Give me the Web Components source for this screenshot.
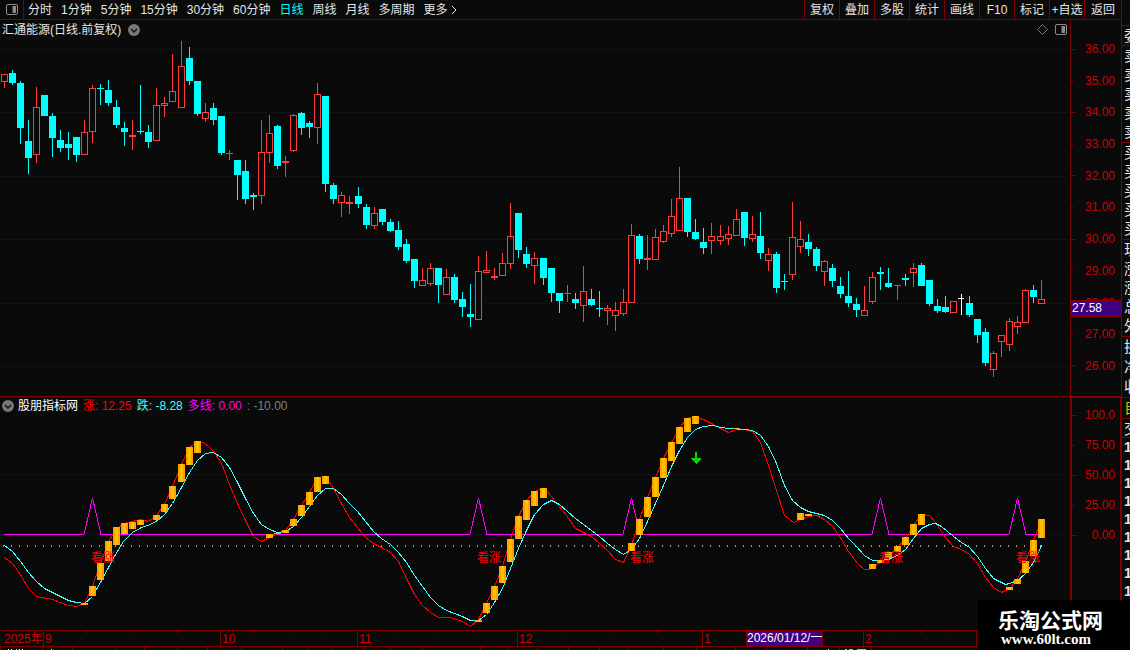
<!DOCTYPE html>
<html lang="zh-CN">
<head>
<meta charset="utf-8">
<meta name="viewport" content="width=device-width, initial-scale=1">
<title>汇通能源</title>
<style>
  html { background: #0a0a0a; }
  body {
    margin: 0;
    overflow-x: hidden;
    color: #e6e6e6;
    font: 12px/18px "Liberation Sans", "Noto Sans CJK SC", sans-serif;
    --bg: #0a0a0a;
    --line: #800000;
    --axis: #d00000;
    --up: #ff3c3c;
    --down: #00ffff;
    --mark: #400080;
  }
</style>
</head>
<body>
<stock-terminal></stock-terminal>

<script>
const define = (name, html, setup) => {
  const template = document.createElement('template');
  template.innerHTML = html;
  customElements.define(name, class extends HTMLElement {
    constructor() {
      super();
      this.attachShadow({ mode: 'open' }).append(template.content.cloneNode(true));
    }
    connectedCallback() {
      if (setup && !this.ready) { this.ready = true; setup(this.shadowRoot, this); }
    }
  });
};

/* x centre, kind (r rising, c falling, w flat), high, body top, body bottom, low */
const CANDLES = `4r 74 74 82 88|12c 70 73 83 85|20c 81 83 128 144|28c 120 141 158 174|36r 87 107 155 163|44c 95 95 116 116|52c 113 116 138 157|60c 130 140 148 152|68c 132 144 148 160|76c 137 137 155 162|84r 120 132 155 155|92r 85 88 132 143|100c 84 88 89 105|108c 80 90 103 106|116c 100 107 125 128|124c 122 128 132 146|132r 120 135 137 150|140c 85 131 132 134|148c 125 132 142 148|156r 88 105 141 141|164r 97 103 106 117|172r 54 91 102 102|181r 41 66 108 108|189c 47 58 81 85|197c 81 81 114 116|205r 103 112 119 122|213c 103 108 120 125|221c 116 116 153 155|229r 150 153 154 160|237c 160 160 175 200|245c 160 171 199 204|253c 193 195 197 210|261r 120 152 196 204|269r 115 133 153 163|277c 125 126 166 169|285r 156 161 163 177|293r 114 115 151 152|301c 112 113 128 135|309c 121 123 127 138|317r 83 94 128 144|325c 96 96 184 192|333c 183 185 199 204|341r 192 195 203 217|349r 196 202 204 214|358c 187 196 204 208|366c 204 207 225 229|374r 207 213 226 229|382c 209 209 222 225|390c 219 222 231 232|398c 221 230 247 250|406c 239 244 261 263|414c 259 259 281 288|422r 268 280 286 286|430r 263 268 284 286|438c 268 268 285 303|446r 269 277 295 295|454c 274 277 300 303|462c 292 299 307 317|470c 284 314 317 327|478r 256 271 320 320|486r 251 270 273 273|494r 268 276 278 280|502r 253 263 276 276|510r 203 236 264 269|518c 213 213 250 258|526c 247 254 264 268|534r 252 258 266 284|543c 258 258 278 285|551c 268 268 293 302|559c 293 293 301 313|567r 285 293 294 302|575c 293 299 303 309|583r 266 291 306 322|591c 289 299 305 306|599c 291 308 309 317|607r 305 308 311 325|615r 302 310 316 331|623r 289 302 314 316|631r 224 235 303 303|639c 234 236 259 264|647r 235 258 260 270|655r 229 237 260 260|663r 225 231 242 243|671r 199 216 234 237|679r 167 198 231 231|687c 198 198 232 237|695c 219 232 239 240|703c 228 242 248 254|711r 223 236 241 254|720r 225 236 241 245|728r 226 234 239 245|736r 209 219 236 236|744c 212 212 238 246|752r 216 234 239 242|760c 212 236 253 259|768r 248 254 261 271|776c 252 254 288 293|784c 274 281 282 290|792r 202 237 275 280|800r 221 239 247 253|808c 234 242 249 256|816c 247 249 266 271|824r 260 261 272 286|832c 264 268 281 287|840c 277 286 294 298|848c 271 296 303 307|856c 298 304 310 317|864r 286 310 316 316|872r 272 277 302 304|880c 267 272 274 290|888c 268 283 287 288|897r 285 285 286 300|905c 274 278 280 286|913r 263 268 273 287|921c 263 265 286 286|929c 280 280 304 306|937c 299 306 311 313|945c 296 307 312 313|953r 301 301 313 313|961w 294 298 299 315|969c 296 303 315 317|977c 319 319 335 343|985c 328 332 363 366|993r 351 353 370 377|1001r 335 335 342 357|1009r 318 321 345 351|1017r 316 322 327 334|1025r 289 290 323 323|1033c 285 290 297 303|1041r 280 299 304 304`
  .split('|').map(s => { const [, x, kind, rest] = s.match(/^(\d+)(\w) (.*)$/); return [+x, kind, ...rest.split(' ').map(Number)]; });

/* x centre, top, bottom of the rising columns in the indicator */
const BARS = `84 603 605|92 586 596|100 563 580|108 541 561|116 527 545|124 523 534|132 522 529|140 520 525|156 515 520|164 504 512|172 486 499|181 464 482|189 447 465|197 441 453|269 534 538|277 533 534|285 530 533|293 519 526|301 505 516|309 492 505|317 477 492|325 476 484|478 620 622|486 603 613|494 586 600|502 566 583|510 539 562|518 516 539|526 500 520|534 491 506|543 488 498|631 543 551|639 519 535|647 497 517|655 477 497|663 458 478|671 442 461|679 427 444|687 418 432|695 416 424|736 428 429|800 513 520|808 514 516|872 564 569|880 560 563|888 552 558|897 546 552|905 537 545|913 524 535|921 514 525|1009 587 590|1017 579 584|1025 561 573|1033 540 556|1041 519 538`
  .split('|').map(s => s.split(' ').map(Number));

const FAST = '4,557 12,563 20,574 28,588 36,596 52,599 68,605 76,606 84,603 92,586 100,563 108,541 116,528 124,523 132,521 140,519 148,521 156,515 164,504 172,486 181,464 189,447 197,441 203,442 209,447 214,452 221,463 229,484 237,503 245,520 253,536 261,541 269,537 277,533 285,530 293,519 301,505 309,492 317,477 325,476 333,488 341,503 349,517 357,527 365,537 373,543 381,547 390,552 398,561 406,578 414,594 422,605 430,612 438,617 450,617 462,621 470,626 478,619 486,603 494,586 502,566 510,539 518,516 526,500 534,491 541,488 547,491 554,500 566,515 575,528 583,532 591,536 599,543 607,550 615,559 623,562 631,545 639,519 647,497 655,477 663,458 671,442 679,427 687,418 691,417 695,417 703,419 711,423 720,428 728,432 736,429 744,429 752,431 760,442 768,465 776,490 784,515 793,522 800,519 808,516 816,515 824,519 832,526 840,537 848,551 857,563 864,569 868,569 872,567 880,562 888,556 897,547 905,538 913,525 921,514 929,515 935,522 945,537 953,546 961,549 969,554 977,563 985,577 993,587 1001,592 1009,588 1017,579 1025,561 1033,540 1041,519';
const SLOW = '4,545 12,551 20,561 28,572 36,581 44,588 52,592 60,596 68,600 76,602 84,603 92,596 100,582 108,567 115,554 123,541 132,532 141,527 150,524 157,520 164,514 172,503 181,487 189,472 197,460 205,453 213,452 221,457 229,467 237,482 245,498 253,513 261,524 269,529 277,532 285,531 293,526 301,517 309,506 317,495 325,488 333,488 341,494 349,503 357,511 365,521 373,531 381,538 390,544 398,552 406,562 414,575 422,586 430,597 438,605 446,610 454,613 462,616 470,620 478,620 486,614 494,602 502,588 510,568 518,548 526,530 534,514 543,504 551,500 559,504 567,511 575,518 583,524 591,530 599,536 607,543 615,549 623,554 631,549 639,538 647,521 655,503 663,485 671,466 679,450 687,437 695,429 703,426 713,425 720,427 728,428 744,429 752,430 760,435 768,446 776,463 784,485 792,500 800,507 808,511 816,513 824,515 832,520 840,528 848,538 856,546 864,555 872,560 880,560 888,559 897,555 905,549 913,538 921,528 929,524 935,523 941,526 953,536 961,542 969,547 977,556 985,568 993,578 1001,582 1005,584 1009,583 1017,580 1025,573 1033,562 1041,545';
const SIGNALS = [92, 478, 631, 880, 1017];

const rect = (x, y, w, h, fill) => `<rect x="${x}" y="${y}" width="${w}" height="${h}" fill="${fill}"/>`;
const dotted = y => `<path d="M1 ${y + .5}H1067" stroke="#800000" stroke-dasharray="1 3"/>`;

const ICONS = `
  .panel-icon { display: block; fill: none; stroke: #8c8c8c; }
  .chevron { display: block; width: 12px; height: 12px; }`;
const PANEL = `<svg class="panel-icon" width="12" height="11" viewBox="0 0 12 11" aria-hidden="true"><rect x=".5" y=".5" width="11" height="10" rx="1.5"/><path d="M6.5 2v7" stroke="#444"/><rect x="7" y="2" width="3" height="7" fill="#8c8c8c" stroke="none"/></svg>`;
const CHEVRON = `<svg class="chevron" viewBox="0 0 12 12" aria-hidden="true"><circle cx="6" cy="6" r="6" fill="#777"/><path d="M3 5l3 3 3-3" fill="none" stroke="#111" stroke-width="1.4"/></svg>`;
const BUTTON = `
  button { margin: 0; padding: 0; border: 0; background: none; color: inherit; font: inherit; white-space: nowrap; cursor: pointer; }`;

define('period-toolbar', `
<style>
  :host { display: flex; height: 19px; border-bottom: 1px solid var(--line); overflow: hidden; }
  ${BUTTON} ${ICONS}
  .layout { display: flex; align-items: center; justify-content: center; width: 24px; border-right: 1px solid var(--line); box-sizing: border-box; }
  nav { display: flex; flex: 1; gap: 9px; padding-left: 4px; line-height: 18px; }
  nav button[aria-pressed="true"] { color: var(--down); }
  .more { display: flex; align-items: center; gap: 3px; }
  .tools { display: flex; line-height: 18px; }
  .tools button { width: 35px; border-left: 1px solid var(--line); }
  .tools button:last-child { width: 37px; }
</style>
<button class="layout" aria-label="切换侧栏">${PANEL}</button>
<nav aria-label="周期">
  <button>分时</button><button>1分钟</button><button>5分钟</button><button>15分钟</button><button>30分钟</button><button>60分钟</button><button aria-pressed="true">日线</button><button>周线</button><button>月线</button><button>多周期</button>
  <button class="more">更多<svg width="6" height="10" viewBox="0 0 6 10" fill="none" stroke="#e6e6e6" aria-hidden="true"><path d="M1 1l4 4-4 4"/></svg></button>
</nav>
<div class="tools">
  <button>复权</button><button>叠加</button><button>多股</button><button>统计</button><button>画线</button><button>F10</button><button>标记</button><button>+自选</button><button>返回</button>
</div>`);

define('candle-chart', `
<style>
  :host { display: block; position: relative; }
  ${BUTTON} ${ICONS}
  .plot { display: block; width: 100%; height: 376px; }
  header { position: absolute; inset: 0 0 auto 0; display: flex; align-items: center; gap: 7px; padding: 0 3px 0 2px; height: 19px; }
  h1 { margin: 0; font: inherit; }
  .right { margin-left: auto; display: flex; align-items: center; gap: 7px; }
</style>
<svg class="plot" viewBox="0 20 1070 376" preserveAspectRatio="none" shape-rendering="crispEdges" role="img" aria-label="日线图"></svg>
<header>
  <h1>汇通能源(日线.前复权)</h1>
  <button aria-label="展开">${CHEVRON}</button>
  <span class="right">
    <svg width="11" height="11" viewBox="0 0 11 11" fill="none" stroke="#777" aria-hidden="true"><path d="M5.500 .5l5 5-5 5-5-5z"/></svg>
    <button aria-label="侧栏">${PANEL}</button>
  </span>
</header>`, root => {
  const color = { r: 'var(--up)', c: 'var(--down)', w: '#fff' };
  root.querySelector('.plot').innerHTML =
    [49, 112, 176, 239, 303, 366].map(dotted).join('') +
    CANDLES.map(([x, kind, high, top, bottom, low]) => {
      const hollow = kind === 'r' && bottom - top > 2;
      return rect(x, high, 1, low - high, color[kind]) + (hollow
        ? `<rect x="${x - 2.5}" y="${top + .5}" width="6" height="${bottom - top - 1}" fill="#0a0a0a" stroke="var(--up)"/>`
        : rect(x - 3, top, kind === 'w' ? 6 : 7, bottom - top, color[kind]));
    }).join('');
});

define('indicator-chart', `
<style>
  :host { display: block; position: relative; }
  ${BUTTON} ${ICONS}
  .plot { display: block; width: 100%; height: 233px; }
  header { position: absolute; inset: 0 0 auto 0; display: flex; align-items: center; gap: 5px; padding-left: 2px; height: 17px; white-space: nowrap; }
  h2 { margin: 0 0 0 -1px; font: inherit; color: #fff; }
  .fast { color: #f00; } .slow { color: #4ff; } .multi { color: #f0f; } .base { color: #808080; }
  .signal { position: absolute; top: 152px; color: #f00; }
</style>
<svg class="plot" viewBox="0 397 1070 233" preserveAspectRatio="none" shape-rendering="crispEdges" role="img" aria-label="指标图"></svg>
<header>
  <button aria-label="展开">${CHEVRON}</button>
  <h2>股朋指标网</h2>
  <span class="fast">涨: 12.25</span><span class="slow">跌: -8.28</span><span class="multi">多线: 0.00</span><span class="base">: -10.00</span>
</header>`, root => {
  const spikes = 'M4 534.5' + SIGNALS.map(x => `H${x - 8}L${x + .5} 498L${x + 9} 534.5`).join('') + 'H1041';
  const line = (points, color) =>
    `<polyline points="${points}" transform="translate(.5 .5)" fill="none" stroke="${color}"/>`;
  root.querySelector('.plot').innerHTML =
    dotted(474) + dotted(534) +
    CANDLES.map(([x]) => rect(x - 1, 545, 1, 2, '#999')).join('') +
    `<path d="${spikes}" fill="none" stroke="#f0f"/>` +
    line(FAST, '#f00') + line(SLOW, '#4ff') +
    BARS.map(([x, top, bottom]) =>
      rect(x - 3, top, 7, bottom - top, '#ffa000') + rect(x - 1, top, 3, bottom - top, '#ffc000')).join('') +
    '<path d="M695 452h2v6h4v1l-5 5-5-5v-1h4z" fill="#00d800"/>';
  for (const x of SIGNALS) {
    const label = document.createElement('span');
    label.className = 'signal';
    label.textContent = '看涨';
    label.style.left = `calc(100% * ${x - 1} / 1070)`;
    root.append(label);
  }
});

define('value-axis', `
<style>
  :host { display: flex; flex-direction: column; box-sizing: border-box; position: relative; color: var(--axis); border-left: 1px solid var(--line); }
  :host([framed]) { border: solid var(--line); border-width: 1px 1px 0 2px; }
  ol { flex: 1; display: flex; flex-direction: column; justify-content: space-between; list-style: none; margin: 0; padding: 22px 6px 23px 0; line-height: 14px; }
  :host([framed]) ol { flex: none; height: 134px; padding: 10px 5px 0 0; }
  li { display: flex; align-items: center; justify-content: space-between; }
  li::before { content: ""; width: 2px; height: 1px; background: var(--line); }
  li:nth-child(odd)::before { width: 5px; }
  mark { position: absolute; left: 0; right: 0; top: 280px; height: 15px; line-height: 15px; border: solid var(--line); border-width: 1px 0; background: var(--mark); color: #fff; padding-left: 1px; }
  mark:empty { display: none; }
</style>
<ol></ol><mark></mark>`, (root, host) => {
  for (const v of host.getAttribute('values').split(' ')) {
    const li = document.createElement('li');
    li.textContent = v;
    root.querySelector('ol').append(li);
  }
  root.querySelector('mark').textContent = host.getAttribute('current') || '';
});

define('time-axis', `
<style>
  :host { display: block; position: relative; border: solid var(--line); border-width: 1px 0; color: var(--axis); }
  .months { display: grid; grid-template-columns: 43fr 177fr 137fr 160fr 185fr 161fr 113fr 145fr; height: 15px; line-height: 17px; }
  .months span { min-width: 0; box-sizing: border-box; border-left: 1px solid var(--line); padding-left: 1px; white-space: nowrap; }
  .months span:first-child { border-color: transparent; padding-left: 3px; }
  svg { position: absolute; left: 0; top: 0; width: 100%; height: 2px; }
  mark { position: absolute; top: 0; left: calc(100% * 746 / 1121); height: 15px; line-height: 15px; border: solid var(--line); border-width: 0 1px; background: var(--mark); color: #fff; white-space: nowrap; }
</style>
<div class="months"><span>2025年</span><span>9</span><span>10</span><span>11</span><span>12</span><span>1</span><span>2</span><span></span></div>
<svg viewBox="0 0 1121 2" preserveAspectRatio="none" shape-rendering="crispEdges" aria-hidden="true"></svg>
<mark>2026/01/12/一</mark>`, root => {
  root.querySelector('svg').innerHTML =
    [87, 132, 176, 254, 289, 323, 397, 437, 477, 563, 610, 656, 742, 891, 920, 948].map(x => rect(x, 0, 1, 2, '#800000')).join('');
});

/* Top edge of the tab row that continues below the window. */
define('tab-edge', `
<style>
  :host { display: block; }
  svg { display: block; width: 100%; height: 3px; }
</style>
<svg viewBox="0 0 1121 3" preserveAspectRatio="none" shape-rendering="crispEdges" aria-hidden="true"></svg>`, root => {
  root.querySelector('svg').innerHTML =
    [0, 42, 72, 115, 144, 177, 207, 241, 282, 308, 332, 364, 390, 422, 480, 508, 537, 568, 599, 628, 663, 696, 735, 766, 807, 839, 871].map(x => rect(x, 0, 1, 3, '#800000')).join('') +
    [8, 11, 16, 19, 22, 51, 828].map(x => rect(x, 2, 1, 1, '#e6e6e6')).join('') +
    rect(845, 2, 2, 1, '#0ff') + rect(849, 2, 4, 1, '#0ff') + rect(857, 2, 9, 1, '#0ff');
});

define('quote-strip', `
<style>
  :host { display: block; width: 9px; box-sizing: border-box; border-left: 1px solid var(--line); padding-top: 25px; overflow: hidden; font-size: 15px; }
  ul { list-style: none; margin: 0; padding: 0 0 0 2px; border-top: 1px solid var(--line); line-height: 19px; }
  li { height: 19px; white-space: nowrap; }
  .five { padding-bottom: 1px; }
  .stats li, .focus li { height: 20px; }
  .focus { color: #c8c800; }
  .head li { height: 18px; }
  .ticks { line-height: 18px; font-weight: 700; font-size: 14px; }
  .ticks li { height: 18px; }
</style>
<ul><li>委</li></ul>
<ul class="five"><li>卖</li><li>卖</li><li>卖</li><li>卖</li><li>卖</li></ul>
<ul class="five"><li>买</li><li>买</li><li>买</li><li>买</li><li>买</li></ul>
<ul class="five"><li>现</li><li>涨</li><li>涨</li><li>总</li><li>外</li></ul>
<ul class="stats"><li>换</li><li>净</li><li>收</li></ul>
<ul class="focus"><li>自</li></ul>
<ul class="head"><li>交</li></ul>
<ul class="ticks"><li>1</li><li>1</li><li>1</li><li>1</li><li>1</li><li>1</li><li>1</li><li>1</li><li>1</li></ul>`);

define('site-badge', `
<style>
  :host { display: flex; flex-direction: column; box-sizing: border-box; width: 152px; height: 50px; padding: 6px 0 0 20px; background: #000; color: #fff; }
  strong { font: 700 21px/26px "Noto Sans CJK SC", sans-serif; }
  a { padding-left: 3px; color: inherit; text-decoration: none; font: 700 15px/15px "Liberation Serif", serif; }
</style>
<strong>乐淘公式网</strong>
<a href="#">www.60lt.com</a>`);

define('stock-terminal', `
<style>
  :host { display: flex; position: relative; background: var(--bg); }
  main { flex: 1; min-width: 0; }
  .charts { display: grid; grid-template-columns: minmax(0, 1fr) 51px; }
  indicator-chart, .charts value-axis[framed] { border-top: 1px solid var(--line); }
  .charts value-axis[framed] { border-top-width: 2px; }
  site-badge { position: absolute; right: 0; bottom: 0; }
</style>
<main>
  <period-toolbar></period-toolbar>
  <div class="charts">
    <candle-chart></candle-chart>
    <value-axis values="36.00 35.00 34.00 33.00 32.00 31.00 30.00 29.00 28.00 27.00 26.00" current="27.58"></value-axis>
    <indicator-chart></indicator-chart>
    <value-axis framed values="100.0 75.00 50.00 25.00 0.00"></value-axis>
  </div>
  <time-axis></time-axis>
  <tab-edge></tab-edge>
</main>
<quote-strip></quote-strip>
<site-badge></site-badge>`);
</script>
</body>
</html>
